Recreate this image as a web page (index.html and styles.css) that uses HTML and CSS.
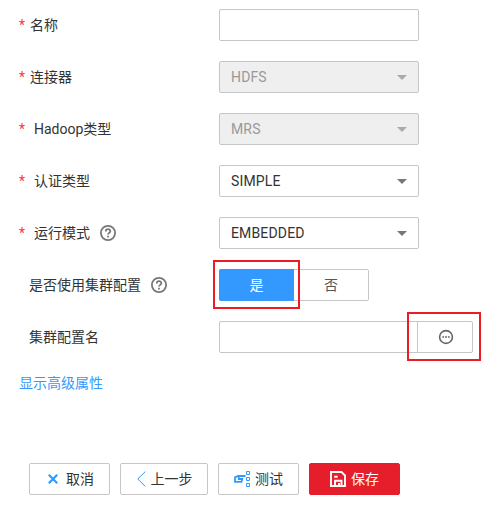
FILE: index.html
```html
<!DOCTYPE html>
<html lang="zh-CN">
<head>
<meta charset="utf-8">
<title>连接配置</title>
<link rel="stylesheet" href="styles.css">
</head>
<body>
<form class="form">
  <div class="row"><div class="label"><span class="star">*</span><span>名称</span></div><div class="field"></div></div>
  <div class="row"><div class="label"><span class="star">*</span><span>连接器</span></div><div class="field disabled"><span>HDFS</span><i class="caret"></i></div></div>
  <div class="row"><div class="label wide"><span class="star">*</span><span>Hadoop类型</span></div><div class="field disabled"><span>MRS</span><i class="caret"></i></div></div>
  <div class="row"><div class="label wide"><span class="star">*</span><span>认证类型</span></div><div class="field"><span>SIMPLE</span><i class="caret"></i></div></div>
  <div class="row"><div class="label wide"><span class="star">*</span><span>运行模式</span>
    <svg class="help" viewBox="0 0 16 16"><circle cx="8" cy="8" r="7.1"/><path d="M5.8 6.4C5.8 3.3 10.3 3.5 10.3 6.2C10.3 7.8 8 7.9 8 9.6M8 10.8V12.4"/></svg></div>
    <div class="field"><span>EMBEDDED</span><i class="caret"></i></div></div>
  <div class="row"><div class="label"><span class="star blank"></span><span>是否使用集群配置</span>
    <svg class="help" viewBox="0 0 16 16"><circle cx="8" cy="8" r="7.1"/><path d="M5.8 6.4C5.8 3.3 10.3 3.5 10.3 6.2C10.3 7.8 8 7.9 8 9.6M8 10.8V12.4"/></svg></div>
    <div class="toggle"><div class="option selected">是<b class="mark mark-yes"></b></div><div class="option">否</div></div></div>
  <div class="row"><div class="label"><span class="star blank"></span><span>集群配置名</span></div>
    <div class="picker"><div class="picker-text"></div><div class="picker-button">
      <svg class="more" viewBox="0 0 16 16"><circle cx="8" cy="8" r="6.4"/><path d="M4.3 8h1.8M7.1 8h1.8M9.9 8h1.8"/></svg><b class="mark mark-more"></b></div></div></div>
</form>
<a class="advanced">显示高级属性</a>
<div class="actions">
  <div class="button cancel"><svg viewBox="0 0 10 10"><path d="M.8 .8L9.2 9.2M9.2 .8L.8 9.2"/></svg>取消</div>
  <div class="button back"><svg viewBox="0 0 9 16"><path d="M8.4 .5L.8 8L8.4 15.5"/></svg>上一步</div>
  <div class="button test"><svg viewBox="0 0 17 16"><path class="hand" d="M11.5 5H4L1 6.3V10.8H7.5L8.3 8H4.8V6"/><path class="nodes" d="M12.5 .5h3v3h-3zM12.5 6.5h3v3h-3zM12.5 12.5h3v3h-3z"/></svg>测试</div>
  <div class="button save"><svg viewBox="0 0 16 16"><path d="M1 1H11.5L15 4.5V15H1zM5 15V9.8H11.5V15M4.2 5.7H7.6M8 13H10"/></svg>保存</div>
</div>
</body>
</html>
```
FILE: styles.css
```css
* { box-sizing: border-box; }
body {
  margin: 0;
  padding: 9px 0 0 19px;
  background: #fff;
  color: #333;
  font: 14px/20px Roboto, "Noto Sans CJK SC", sans-serif;
}
svg { fill: none; flex: none; }
.form { display: flex; flex-direction: column; gap: 20px; margin: 0; }
.row { display: flex; height: 32px; }
.label { display: flex; align-items: center; width: 200px; white-space: nowrap; }
.star { width: 11px; color: #f33; flex: none; }
.blank { width: 10px; }
.wide .star { width: 15px; }
.help { width: 16px; height: 16px; margin-left: 10px; stroke: #777; stroke-width: 1.8; }
.field {
  display: flex; align-items: center; justify-content: space-between;
  width: 200px; padding: 0 11px;
  border: 1px solid #c6c6c6; border-radius: 2px;
  letter-spacing: .15px;
}
.disabled { background: #efefef; color: #999; }
.caret { border: 5px solid transparent; border-top-color: #777; border-bottom: 0; }
.disabled .caret { border-top-color: #aaa; }
.toggle { display: flex; width: 150px; border: 1px solid #c6c6c6; border-radius: 2px; }
.option { position: relative; flex: 1; line-height: 30px; text-align: center; color: #555; }
.selected { flex: 0 0 75px; margin: -1px 0 -1px -1px; line-height: 32px; background: #39f; color: #fff; border-radius: 2px 0 0 2px; }
.mark { position: absolute; border: 2px solid #ed1c24; }
.mark-yes { left: -6px; top: -9px; width: 87px; height: 49px; z-index: 1; }
.mark-more { left: -11px; top: -10px; width: 74px; height: 49px; }
.picker { display: flex; width: 254px; border: 1px solid #c6c6c6; border-radius: 2px; }
.picker-text { width: 197px; }
.picker-button { position: relative; display: flex; flex: 1; align-items: center; justify-content: center; border-left: 1px solid #c6c6c6; }
.more { width: 16px; height: 16px; margin-left: 1px; stroke: #666; stroke-width: 1.6; }
.advanced { display: block; margin-top: 20px; color: #39f; }
.actions { display: flex; gap: 10px; margin: 70px 0 0 10px; }
.button {
  display: flex; align-items: center; justify-content: center; height: 32px;
  border: 1px solid #c6c6c6; border-radius: 2px; white-space: nowrap;
}
.button svg { stroke: #39f; }
.cancel, .test { width: 81px; }
.back { width: 88px; }
.save { width: 91px; background: #e61e2b; border-color: #e61e2b; color: #fff; }
.cancel { padding-left: 3px; }
.cancel svg { width: 10px; height: 10px; margin-right: 8px; stroke-width: 2.2; }
.back svg { width: 9px; height: 16px; margin-right: 5px; }
.back { padding-left: 1px; }
.test svg { width: 17px; height: 16px; margin-right: 4px; }
.test .hand { stroke-width: 1.8; }
.save svg { width: 16px; height: 16px; margin-right: 5px; stroke: #fff; stroke-width: 1.9; }
```
